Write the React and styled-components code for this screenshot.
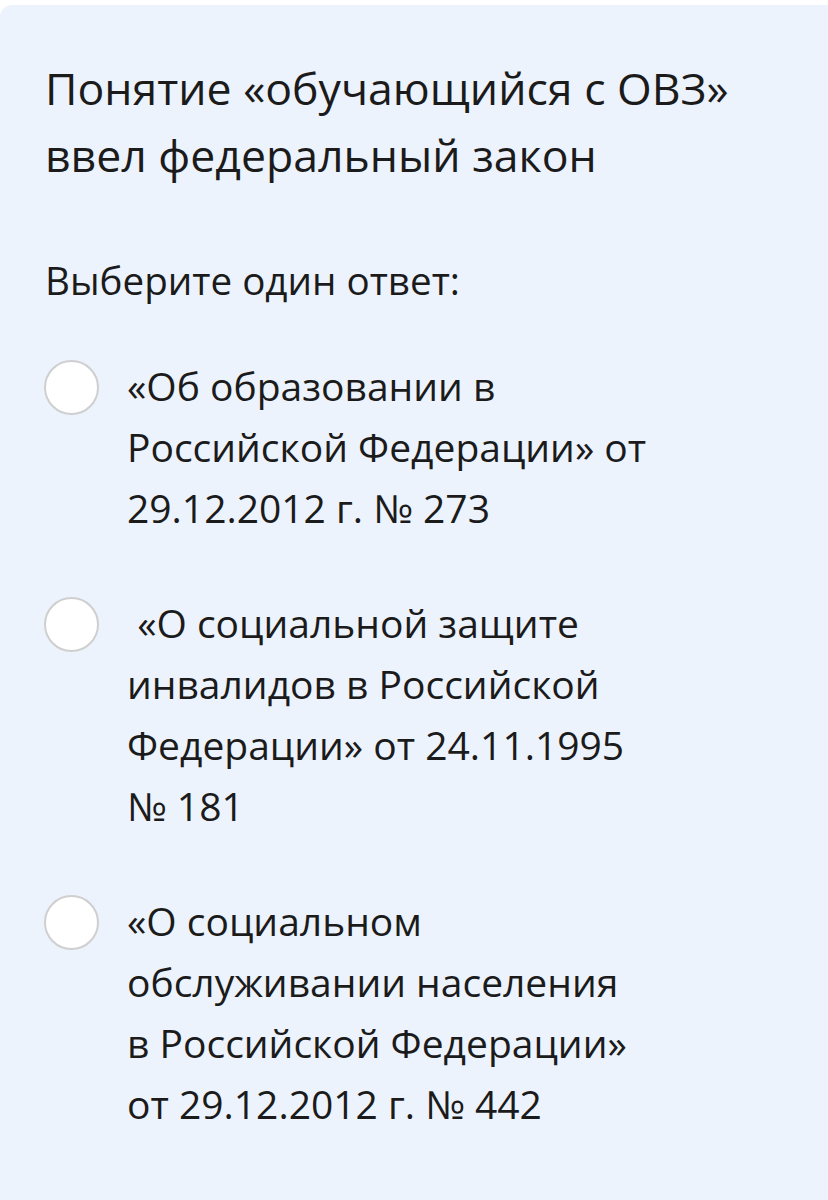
import { useState } from 'react';
import styled, { createGlobalStyle } from 'styled-components';

const GlobalStyle = createGlobalStyle`
  html, body {
    margin: 0;
    padding: 0;
    background: #ffffff;
  }
  body {
    font-family: "Open Sans", "Noto Sans", sans-serif;
    color: #1b1b1b;
  }
`;

const Card = styled.div`
  margin-top: 5px;
  min-height: 1195px;
  box-sizing: border-box;
  background: #edf3fd;
  border-top-left-radius: 12px;
  padding: 49px 40px 40px 45px;
`;

const Title = styled.h1`
  margin: 0;
  font-size: 44.6px;
  font-weight: 400;
  line-height: 67px;
  max-width: 720px;
`;

const Prompt = styled.p`
  margin: 62px 0 0;
  font-size: 38.6px;
  line-height: 60px;
`;

const Options = styled.div`
  display: flex;
  flex-direction: column;
  gap: 54px;
  margin-top: 45px;
`;

const Option = styled.label`
  display: flex;
  align-items: flex-start;
  gap: 28px;
  cursor: pointer;
`;

const Circle = styled.span`
  flex: none;
  width: 51px;
  height: 51px;
  margin-top: 5px;
  margin-left: -1px;
  border-radius: 50%;
  border: 2px solid ${(p) => (p.$checked ? '#3b6fd8' : '#cfcfcf')};
  background: #ffffff;
  display: flex;
  align-items: center;
  justify-content: center;

  &::after {
    content: '';
    width: 24px;
    height: 24px;
    border-radius: 50%;
    background: #3b6fd8;
    display: ${(p) => (p.$checked ? 'block' : 'none')};
  }
`;

const Hidden = styled.input`
  display: none;
`;

const OptionText = styled.span`
  font-size: 39px;
  line-height: 61px;
  max-width: 545px;
  white-space: pre-wrap;
`;

const answers = [
  '«Об образовании в Российской Федерации» от 29.12.2012 г. № 273',
  ' «О социальной защите инвалидов в Российской Федерации» от 24.11.1995 № 181',
  '«О социальном обслуживании населения в\u00a0Российской Федерации» от\u00a029.12.2012 г. № 442',
];

const App = () => {
  const [selected, setSelected] = useState(null);

  return (
    <>
      <GlobalStyle />
      <Card>
        <Title>Понятие «обучающийся с ОВЗ» ввел федеральный закон</Title>
        <Prompt>Выберите один ответ:</Prompt>
        <Options>
          {answers.map((text, i) => (
            <Option key={i}>
              <Hidden
                type="radio"
                name="answer"
                checked={selected === i}
                onChange={() => setSelected(i)}
              />
              <Circle $checked={selected === i} />
              <OptionText>{text}</OptionText>
            </Option>
          ))}
        </Options>
      </Card>
    </>
  );
};

export default App;
